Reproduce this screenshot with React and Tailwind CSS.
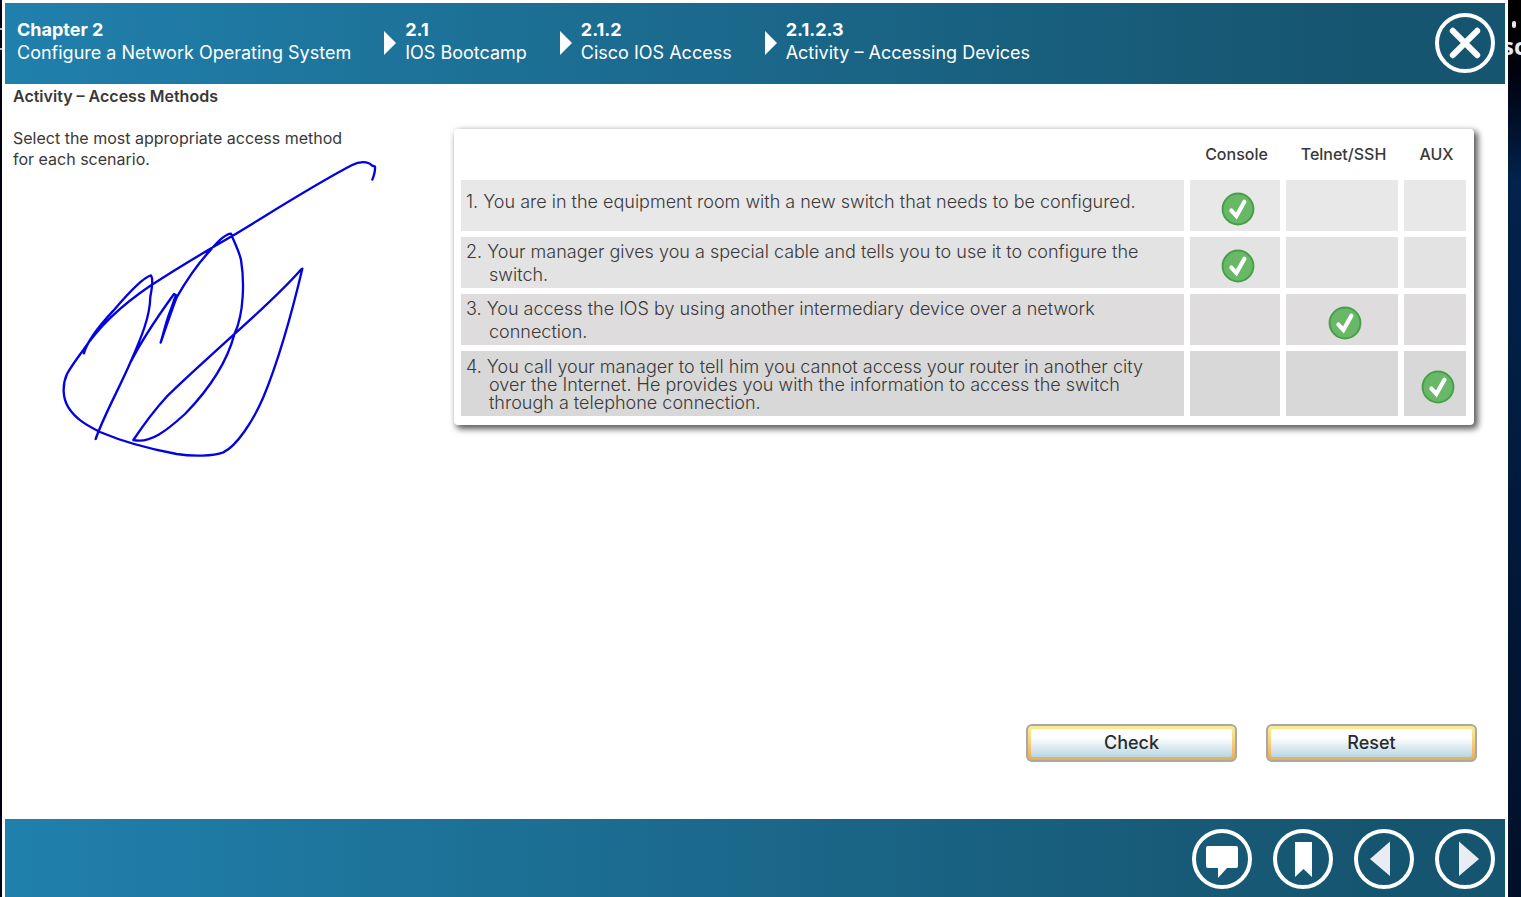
import { useState } from "react";

const crumbs = [
  { number: "Chapter 2", title: "Configure a Network Operating System" },
  { number: "2.1", title: "IOS Bootcamp" },
  { number: "2.1.2", title: "Cisco IOS Access" },
  { number: "2.1.2.3", title: "Activity – Accessing Devices" },
];

const methods = ["Console", "Telnet/SSH", "AUX"];

const scenarios = [
  {
    text: "1. You are in the equipment room with a new switch that needs to be configured.",
    answer: "Console",
    cell: "bg-[#e8e8e8]",
    height: "h-[51px]",
    body: "leading-[23px] pb-2",
  },
  {
    text: "2. Your manager gives you a special cable and tells you to use it to configure the switch.",
    answer: "Console",
    cell: "bg-[#e3e3e3]",
    height: "h-[51px]",
    body: "leading-[23px]",
  },
  {
    text: "3. You access the IOS by using another intermediary device over a network connection.",
    answer: "Telnet/SSH",
    cell: "bg-[#dedcdd]",
    height: "h-[51px]",
    body: "leading-[23px]",
  },
  {
    text: "4. You call your manager to tell him you cannot access your router in another city over the Internet. He provides you with the information to access the switch through a telephone connection.",
    answer: "AUX",
    cell: "bg-[#d8d8d8]",
    height: "h-[65px]",
    body: "leading-[18px] pt-0.5",
  },
];

const solved = scenarios.map((s) => s.answer);

function CheckMark() {
  return (
    <svg viewBox="0 0 34 34" className="hidden size-[34px] peer-checked:block" aria-hidden="true">
      <circle cx="17" cy="17" r="15.4" fill="#68b867" stroke="#47a048" strokeWidth="2" />
      <path d="M10.4 18.6 L15.4 24 L23.4 9.800" fill="none" stroke="#fff" strokeWidth="4.2" strokeLinecap="round" strokeLinejoin="miter" />
    </svg>
  );
}

function RoundButton({ label, children }) {
  return (
    <button type="button" aria-label={label} className="size-[60px] shrink-0 rounded-full border-4 border-white">
      <svg viewBox="0 0 52 52" className="size-[52px]" aria-hidden="true">
        {children}
      </svg>
    </button>
  );
}

function GlossyButton({ children, onClick }) {
  return (
    <button
      type="button"
      onClick={onClick}
      className="flex h-[38px] w-[211px] rounded-md border-2 border-[#a9a8a6] bg-linear-to-b from-[#f9ee93] via-[#f6cf78] to-[#e5ad55] p-[3px]"
    >
      <span className="flex flex-1 items-center justify-center rounded-xs bg-linear-to-b from-white from-30% to-[#b9d6e4] text-lg leading-none font-medium text-[#262b2e]">
        {children}
      </span>
    </button>
  );
}

function Sketch() {
  return (
    <svg
      viewBox="0 0 1050 960"
      className="pointer-events-none absolute top-[66px] left-[45px] h-[320px] w-[350px]"
      fill="none"
      stroke="#0303e0"
      strokeWidth="7"
      strokeLinecap="round"
      strokeLinejoin="round"
      aria-hidden="true"
    >
      <path d="M967 89 C972 76 976 62 975 50 L965 46 C954 34 930 33 905 46 C790 106 660 190 540 262 C460 308 380 356 300 408 C220 462 150 525 100 600 C82 624 60 656 51 672 C36 705 38 745 55 772 C78 808 110 826 150 846 C230 880 310 899 380 912 C430 920 490 918 520 907 C560 888 610 812 640 742 C690 620 730 470 757 356 L752 360 C690 430 620 492 552 553 C470 628 400 690 350 740 C315 778 280 825 250 870 C300 882 350 842 405 792 C470 725 530 640 553 553 C583 490 583 390 573 330 C568 305 556 285 543 251 C525 252 500 278 480 302 C440 345 410 390 380 442 C360 495 345 540 332 578 C340 550 350 510 358 490 C366 470 372 450 378 436 L372 432 C330 490 280 560 240 640 C210 710 165 790 137 867 C160 800 210 710 240 640 C275 560 300 500 301 440 C308 405 309 385 303 376 C280 382 230 435 190 482 C150 525 112 570 102 610" />
    </svg>
  );
}

export default function App() {
  const [answers, setAnswers] = useState(solved);
  const choose = (row, method) => setAnswers(answers.map((a, i) => (i === row ? method : a)));

  return (
    <div className="flex min-h-screen bg-[#000212] font-['Inter',sans-serif] text-[#3a3838]">
      <div className="flex w-[2px] flex-col gap-[18px] pt-7" aria-hidden="true">
        <span className="h-[2px] bg-[#a9b4c4]" />
        <span className="h-[2px] bg-[#a9b4c4]" />
      </div>

      <div className="flex flex-1 flex-col border-x-3 border-t-3 border-white bg-white">
        <header className="flex h-[81px] items-center justify-between bg-linear-to-r from-[#2080ac] to-[#165570] to-90% pr-2.5 pb-0.5 pl-3 text-white">
          <nav aria-label="Breadcrumb" className="flex items-center">
            {crumbs.map((crumb, i) => (
              <div key={crumb.number} className="flex items-center">
                {i > 0 && (
                  <svg viewBox="0 0 12 24" className="mr-[9px] ml-[33px] h-6 w-3" aria-hidden="true">
                    <path d="M0 0 L12 12 L0 24 Z" fill="#fff" />
                  </svg>
                )}
                <a href={"#" + crumb.number} className="pb-1 text-lg leading-[23px] whitespace-nowrap">
                  <span className="block font-bold">{crumb.number}</span>
                  <span className="block">{crumb.title}</span>
                </a>
              </div>
            ))}
          </nav>
          <RoundButton label="Close">
            <path d="M13.8 13.8 L38.2 38.2 M38.2 13.8 L13.8 38.2" stroke="#fff" strokeWidth="6" strokeLinecap="round" />
          </RoundButton>
        </header>

        <main className="relative flex flex-1 flex-col">
          <Sketch />
          <div className="flex">
            <section className="w-[449px] shrink-0 pl-2">
              <h1 className="pt-0.5 text-base leading-[21px] font-semibold">Activity – Access Methods</h1>
              <p className="mt-[21px] w-[350px] text-base leading-[21px]">
                Select the most appropriate access method for each scenario.
              </p>
            </section>

            <section className="mt-[45px] mr-[31px] flex-1 rounded-sm bg-white pr-0.5 pb-[3px] pl-px shadow-[3px_3px_6px_1px_rgba(0,0,0,0.65)]">
              <table className="w-full table-fixed border-separate border-spacing-1.5">
                <colgroup>
                  <col />
                  <col className="w-[90px]" />
                  <col className="w-[112px]" />
                  <col className="w-[62px]" />
                </colgroup>
                <thead>
                  <tr className="h-[39px]">
                    <td />
                    {methods.map((method) => (
                      <th key={method} scope="col" className="p-0 pb-0.5 pl-[3px] text-base font-medium">
                        {method}
                      </th>
                    ))}
                  </tr>
                </thead>
                <tbody>
                  {scenarios.map((scenario, row) => (
                    <tr key={scenario.text} className={scenario.height}>
                      <th scope="row" className={"px-0 py-0 text-left align-middle font-light " + scenario.cell}>
                        <div className={"pr-6 pl-7 -indent-[23px] text-lg " + scenario.body}>{scenario.text}</div>
                      </th>
                      {methods.map((method) => (
                        <td key={method} className={"p-0 " + scenario.cell}>
                          <label className="relative flex h-12 items-center justify-center pt-1.5 pl-1.5">
                            <input
                              type="radio"
                              name={"scenario-" + row}
                              aria-label={method}
                              checked={answers[row] === method}
                              onChange={() => choose(row, method)}
                              className="peer sr-only"
                            />
                            <CheckMark />
                          </label>
                        </td>
                      ))}
                    </tr>
                  ))}
                </tbody>
              </table>
            </section>
          </div>

          <div className="mt-auto mr-7 mb-[57px] flex justify-end gap-[29px]">
            <GlossyButton onClick={() => setAnswers(solved)}>Check</GlossyButton>
            <GlossyButton onClick={() => setAnswers([])}>Reset</GlossyButton>
          </div>
        </main>

        <footer className="flex h-[78px] items-center justify-end gap-[21px] bg-linear-to-r from-[#2080ac] to-[#165570] to-90% pt-0.5 pr-2.5">
          <RoundButton label="Comments">
            <path d="M12 13 H40 Q42 13 42 15 V33 Q42 35 40 35 H31 L22 45 V35 H12 Q10 35 10 33 V15 Q10 13 12 13 Z" fill="#fff" />
          </RoundButton>
          <RoundButton label="Bookmark">
            <path d="M18 9 H35 V44 L26.500 36 L18 44 Z" fill="#fff" />
          </RoundButton>
          <RoundButton label="Previous">
            <path d="M32 8.500 V43 L12 26 Z" fill="#e9edf3" />
          </RoundButton>
          <RoundButton label="Next">
            <path d="M20 8.500 V43 L40 26 Z" fill="#e9edf3" />
          </RoundButton>
        </footer>
      </div>

      <div
        className="w-[13px] overflow-hidden bg-linear-to-b from-black via-[#02234c] via-20% to-[#011029] pt-[21px] text-[#e3e9f2]"
        aria-hidden="true"
      >
        <div className="ml-1 h-[7px] w-1 rounded-xs bg-[#e3e9f2]" />
        <div className="-ml-1.5 font-['Open_Sans',sans-serif] text-2xl leading-9 font-bold">sc</div>
      </div>
    </div>
  );
}
